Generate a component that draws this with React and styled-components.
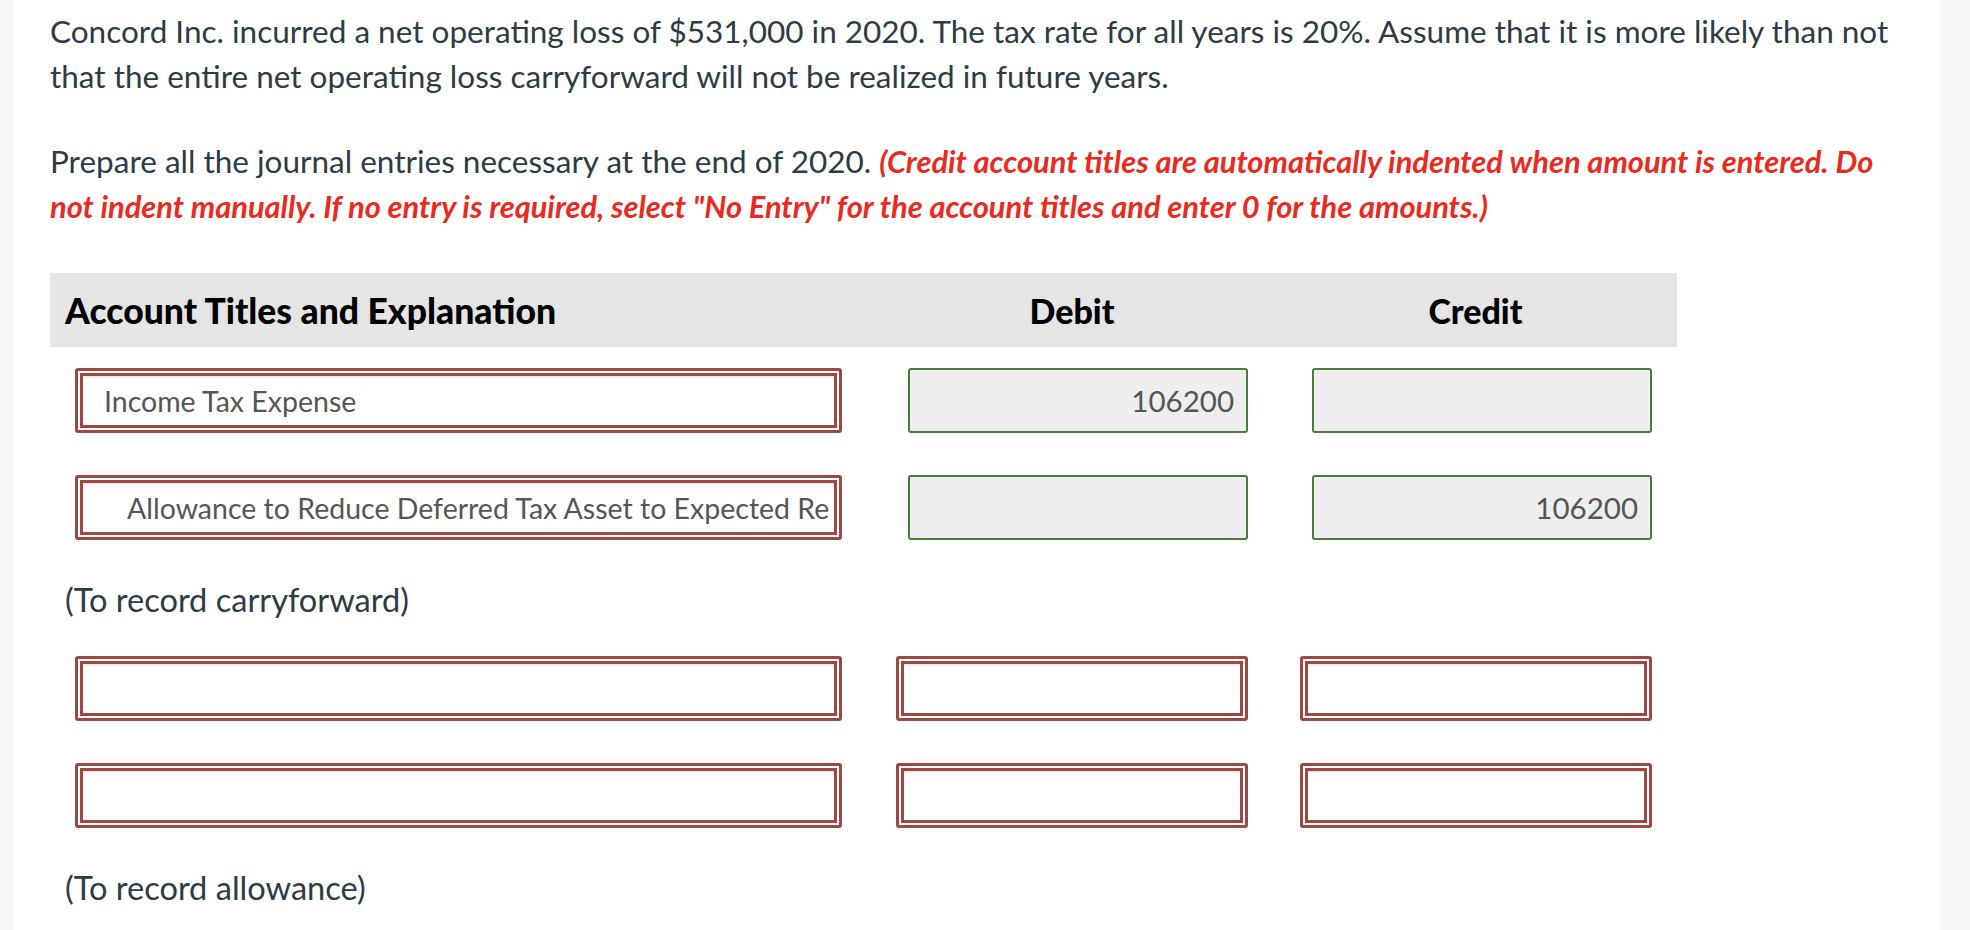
import React from "react";
import styled, { createGlobalStyle } from "styled-components";

const Global = createGlobalStyle`
  html, body { margin: 0; padding: 0; background: #f7f7f7; }
  body { font-family: Lato, "Open Sans", sans-serif; }
  * { box-sizing: border-box; }
`;

const Page = styled.div`
  display: flex;
  min-height: 930px;
`;

const Main = styled.main`
  margin-left: 14px;
  width: 1926px;
  min-height: 930px;
  background: #ffffff;
  padding: 9px 0 0 36px;
`;

const Para = styled.p`
  margin: 0 0 ${(p) => p.$gap}px;
  max-width: 1860px;
  font-size: 31.5px;
  line-height: 45px;
  color: #2d3b45;
`;

const Warn = styled.span`
  color: #ea2a1e;
  font-size: 30.8px;
  font-weight: 700;
  font-style: italic;
`;

const Table = styled.div`
  width: 1627px;
`;

const Grid = styled.div`
  display: grid;
  grid-template-columns: 820px 404px 403px;
  align-items: center;
`;

const HeadRow = styled(Grid)`
  height: 74px;
  background: #e5e5e5;
  margin-bottom: 21px;
`;

const HeadCell = styled.div`
  font-size: ${(p) => (p.$left ? 35.5 : 34)}px;
  font-weight: 900;
  color: #000;
  text-align: ${(p) => (p.$left ? "left" : "center")};
  padding-left: ${(p) => (p.$left ? "15px" : "0")};
`;

const Row = styled(Grid)`
  height: 65px;
  margin-bottom: ${(p) => p.$gap}px;
`;

const Cell = styled.div`
  display: flex;
  justify-content: ${(p) => (p.$end ? "flex-end" : "flex-start")};
  padding-left: ${(p) => p.$pl || 0}px;
  padding-right: ${(p) => p.$pr || 0}px;
`;

const RedFrame = styled.div`
  width: ${(p) => p.$w}px;
  height: 65px;
  border: 3px solid #9e4844;
  border-radius: 3px;
  padding: 2px;
  background: #fff;
`;

const RedInput = styled.input`
  display: block;
  width: 100%;
  height: 100%;
  border: 3px solid #9e4844;
  border-radius: 0;
  background: #fff;
  box-shadow: inset 0 3px 3px -2px rgba(0, 0, 0, 0.12);
  font-family: Lato, sans-serif;
  font-size: 28.5px;
  color: #555;
  padding: 0 4px 0 ${(p) => (p.$indent ? 44 : 21)}px;
  outline: none;
`;

const GreenInput = styled.input`
  display: block;
  width: 340px;
  height: 65px;
  border: 2px solid #4c7a3e;
  border-radius: 3px;
  background: #eeeeee;
  font-family: Lato, sans-serif;
  font-size: 29.5px;
  color: #555;
  text-align: right;
  padding: 0 12px;
  outline: none;
`;

const Note = styled.div`
  font-size: 32.6px;
  line-height: 45px;
  color: #2d3b45;
  padding-left: 15px;
  margin: ${(p) => p.$top}px 0 ${(p) => p.$bottom}px;
`;

function Amount({ value, filled }) {
  if (filled) return <GreenInput readOnly value={value} />;
  return (
    <RedFrame $w={352}>
      <RedInput readOnly value={value} />
    </RedFrame>
  );
}

function JournalRow({ account, indent, debit, credit, filled, gap }) {
  return (
    <Row $gap={gap}>
      <Cell $pl={25}>
        <RedFrame $w={767}>
          <RedInput readOnly value={account} $indent={indent} />
        </RedFrame>
      </Cell>
      <Cell $end $pr={26}>
        <Amount value={debit} filled={filled} />
      </Cell>
      <Cell $end $pr={25}>
        <Amount value={credit} filled={filled} />
      </Cell>
    </Row>
  );
}

export default function App() {
  return (
    <>
      <Global />
      <Page>
        <Main>
          <Para $gap={40}>
            Concord Inc. incurred a net operating loss of $531,000 in 2020. The tax rate for all years is 20%. Assume
            that it is more likely than not that the entire net operating loss carryforward will not be realized in
            future years.
          </Para>
          <Para $gap={44}>
            Prepare all the journal entries necessary at the end of 2020.{" "}
            <Warn>
              (Credit account titles are automatically indented when amount is entered. Do not indent manually. If no
              entry is required, select "No Entry" for the account titles and enter 0 for the amounts.)
            </Warn>
          </Para>
          <Table>
            <HeadRow>
              <HeadCell $left>Account Titles and Explanation</HeadCell>
              <HeadCell>Debit</HeadCell>
              <HeadCell>Credit</HeadCell>
            </HeadRow>
            <JournalRow account="Income Tax Expense" debit="106200" credit="" filled gap={42} />
            <JournalRow
              account="Allowance to Reduce Deferred Tax Asset to Expected Realizable Value"
              indent
              debit=""
              credit="106200"
              filled
              gap={0}
            />
            <Note $top={37} $bottom={34}>(To record carryforward)</Note>
            <JournalRow account="" debit="" credit="" gap={42} />
            <JournalRow account="" debit="" credit="" gap={0} />
            <Note $top={37} $bottom={0}>(To record allowance)</Note>
          </Table>
        </Main>
      </Page>
    </>
  );
}
